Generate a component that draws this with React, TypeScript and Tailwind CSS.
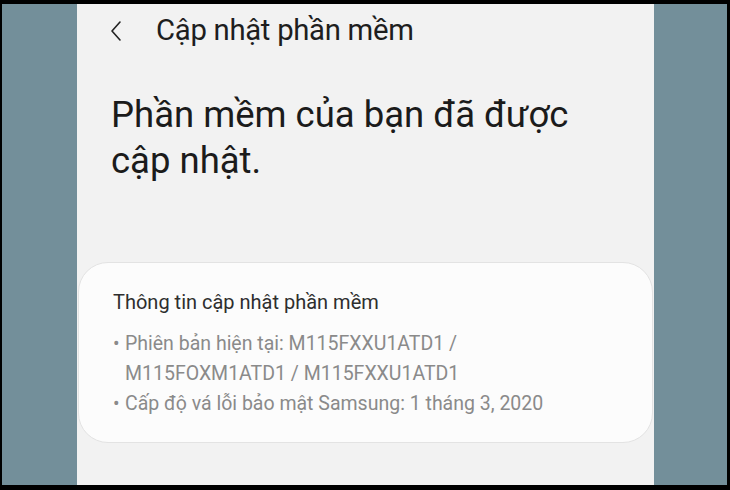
const info = [
  { bullet: true, text: "Phiên bản hiện tại: M115FXXU1ATD1 /" },
  { bullet: false, text: "M115FOXM1ATD1 / M115FXXU1ATD1" },
  { bullet: true, text: "Cấp độ vá lỗi bảo mật Samsung: 1 tháng 3, 2020" },
];

export default function App() {
  return (
    <div className="w-[730px] h-[490px] bg-black pt-[4px] pb-[5px] pl-[2px] pr-[3px] font-['Roboto',sans-serif]">
      <div className="flex h-full">
        <div className="w-[75px] bg-[#738f9a]" />

        {/* Phone screen */}
        <div className="w-[577px] bg-[#f2f2f2] flex flex-col">
          {/* Header */}
          <div className="flex items-center h-[54px] pl-[32px]">
            <svg width="14" height="22" viewBox="0 0 14 22" className="text-[#222]">
              <path d="M11 2 L3 11 L11 20" fill="none" stroke="currentColor" strokeWidth="1.6" strokeLinecap="round" strokeLinejoin="round" />
            </svg>
            <span className="ml-[33px] text-[29.3px] text-[#1e1e1e] tracking-[-0.3px]">Cập nhật phần mềm</span>
          </div>

          <h1 className="mt-[34px] pl-[34px] pr-[10px] text-[36.5px] leading-[46px] text-[#1b1b1b] whitespace-nowrap">
            Phần mềm của bạn đã được
            <br />
            cập nhật.
          </h1>

          {/* Info card */}
          <div className="mt-[78px] mx-[1px] h-[181px] rounded-[30px] bg-[#fcfcfc] border border-[#e3e3e3] pl-[34px] pt-[24px]">
            <div className="text-[20px] text-[#2e2e2e]">Thông tin cập nhật phần mềm</div>
            <div className="mt-[12px] text-[19.5px] leading-[30px] text-[#8a8a8a]">
              {info.map((row, i) => (
                <div key={i} className="flex">
                  <span className="w-[12px]">{row.bullet ? "•" : ""}</span>
                  <span>{row.text}</span>
                </div>
              ))}
            </div>
          </div>
        </div>

        <div className="flex-1 bg-[#738f9a]" />
      </div>
    </div>
  );
}
